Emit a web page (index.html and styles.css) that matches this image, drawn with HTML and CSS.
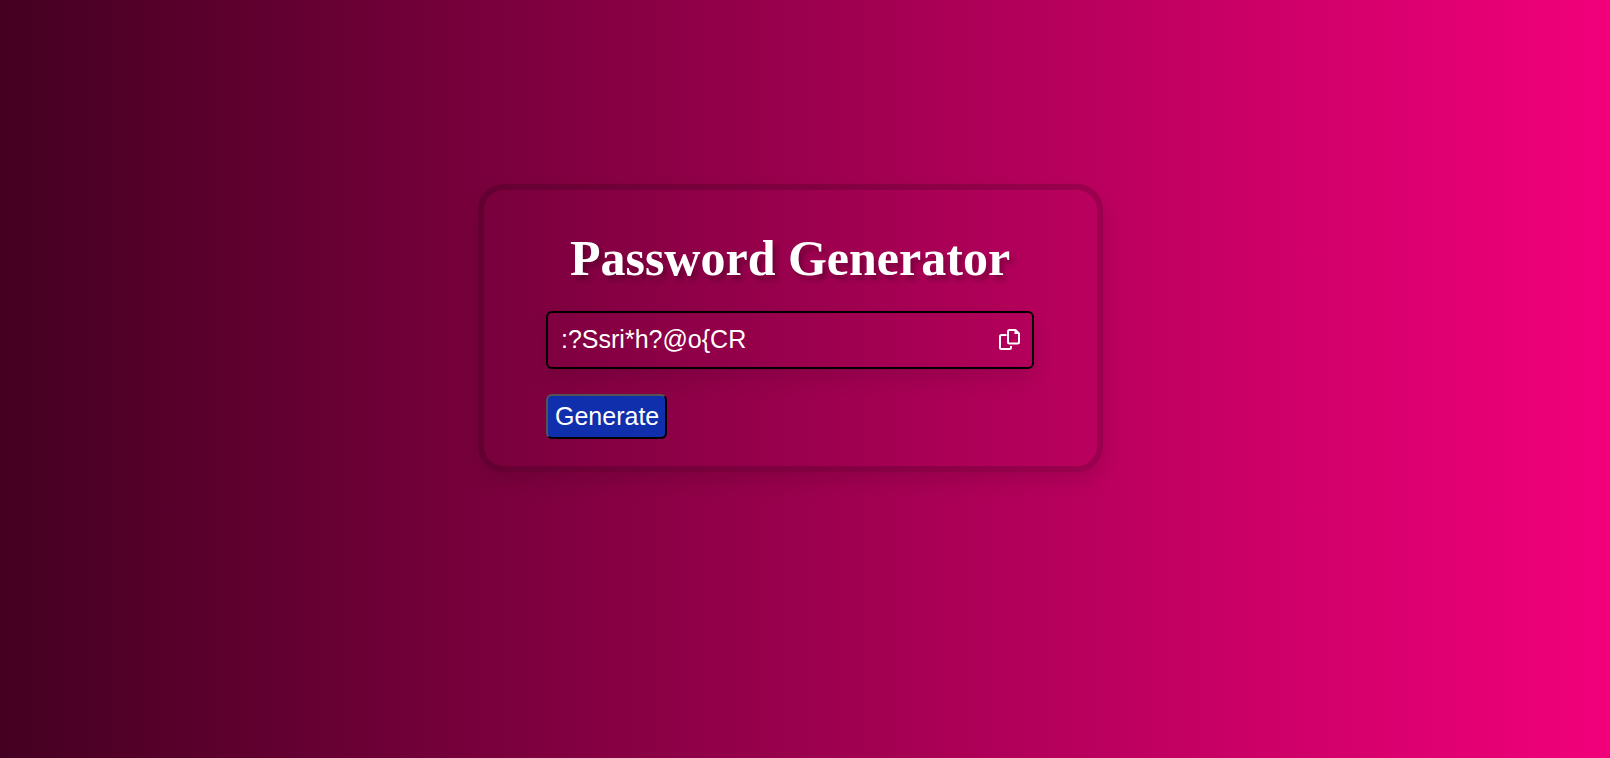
FILE: index.html
```
<!DOCTYPE html>
<html lang="en">
<head>
<meta charset="utf-8">
<meta name="viewport" content="width=device-width, initial-scale=1">
<title>Password Generator</title>
<link rel="stylesheet" href="styles.css">
</head>
<body>
<main class="card">
  <h1 class="title">Password Generator</h1>
  <div class="field">
    <input class="password" type="text" value=":?Ssri*h?@o{CR" aria-label="Generated password" readonly spellcheck="false">
    <button class="copy" type="button" aria-label="Copy password">
      <svg viewBox="0 0 21 21" width="21" height="21" fill="none" stroke="currentColor" stroke-width="2" stroke-linejoin="round" aria-hidden="true">
        <path d="M10.500 1h6l3.500 3.500V13a1.500 1.500 0 0 1-1.500 1.500h-8A1.500 1.500 0 0 1 9 13V2.500A1.500 1.500 0 0 1 10.500 1z"/>
        <path d="M15.500 1v4h4.500l-3-4z" fill="currentColor" stroke="none"/>
        <path d="M7.500 6h-5A1.500 1.500 0 0 0 1 7.500v11A1.500 1.500 0 0 0 2.500 20h8a1.500 1.500 0 0 0 1.500-1.500V17"/>
      </svg>
    </button>
  </div>
  <button class="generate" type="button">Generate</button>
</main>
</body>
</html>
```
FILE: styles.css
```
* {
  box-sizing: border-box;
}

body {
  margin: 0;
  min-height: 100vh;
  padding: 184px 29px 24px 0;
  display: flex;
  justify-content: center;
  align-items: flex-start;
  background: linear-gradient(to right, #440021, #f2007b);
  color: #fff;
  font-family: "Liberation Sans", Arial, sans-serif;
}

.card {
  width: 100%;
  max-width: 625px;
  padding: 40px 63px 27px 62px;
  border: 6px solid rgba(0, 0, 0, 0.17);
  border-radius: 26px;
  box-shadow: 2px 10px 20px rgba(0, 0, 0, 0.1);
}

.title {
  margin: 0 0 24px;
  font-family: "Liberation Serif", "Times New Roman", serif;
  font-size: 50px;
  line-height: 57px;
  text-align: center;
  text-shadow: 4px 5px 5px rgba(0, 0, 0, 0.25);
}

.field {
  display: flex;
  align-items: center;
  height: 58px;
  margin-bottom: 25px;
  padding: 0 12px 2px 13px;
  border: 2px solid #000;
  border-radius: 6px;
  box-shadow: 0 10px 20px rgba(0, 0, 0, 0.1);
}

.password {
  flex: 1;
  min-width: 0;
  padding: 0;
  border: 0;
  outline: 0;
  background: transparent;
  color: inherit;
  font: 25px "Liberation Sans", Arial, sans-serif;
}

.copy {
  display: flex;
  padding: 0;
  border: 0;
  background: none;
  color: inherit;
  cursor: pointer;
}

.generate {
  display: block;
  height: 45px;
  padding: 0 6px 0 7px;
  border: 2px outset #000;
  border-radius: 6px;
  background: #0f2fad;
  color: inherit;
  font: 25px "Liberation Sans", Arial, sans-serif;
  cursor: pointer;
}
```
